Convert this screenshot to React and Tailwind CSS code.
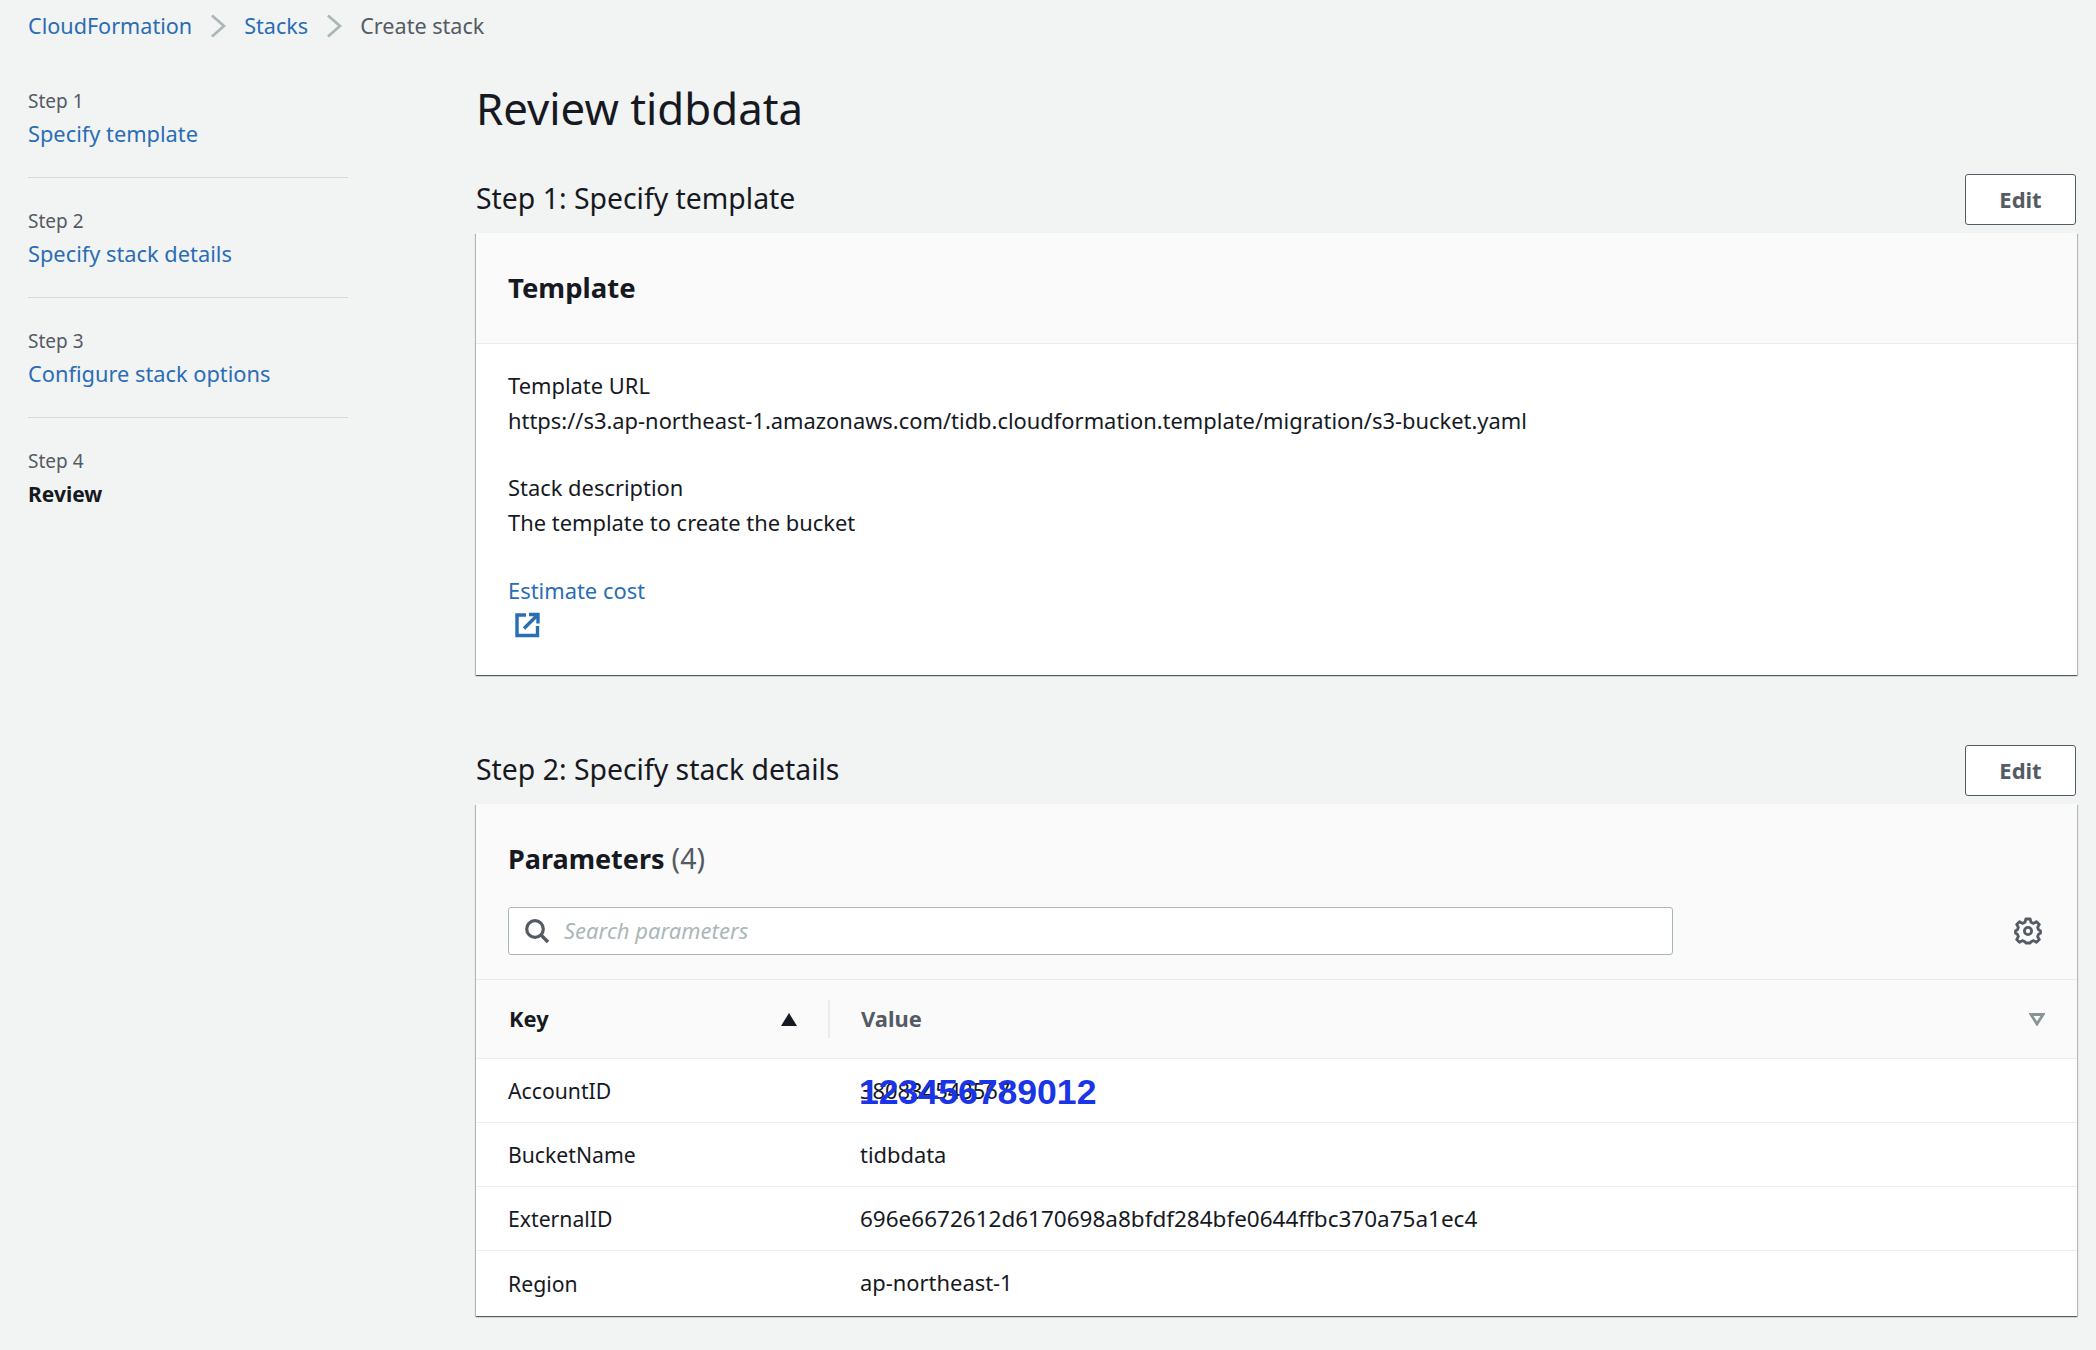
import React from "react";

const font = "font-['Noto_Sans',sans-serif]";

function Chevron() {
  return (
    <svg width="16" height="24" viewBox="0 0 16 24" fill="none" className="shrink-0">
      <path d="M2 1.5 L14 12 L2 22.5" stroke="#aab7b8" strokeWidth="2.8" />
    </svg>
  );
}

function Step({ n, label, active, last }) {
  return (
    <div className={last ? "pt-[31px]" : "h-[120px] pt-[31px] border-b border-[#d5dbdb]"}>
      <div className="text-[19px] leading-[24px] text-[#545b64]">Step {n}</div>
      <div className={`mt-[7px] leading-[28px] ${active ? "font-bold text-[#16191f] text-[21px]" : "text-[21.8px] text-[#2a6db5]"}`}>{label}</div>
    </div>
  );
}

function SectionHead({ title }) {
  return (
    <div className="flex items-center justify-between h-[51px] mb-[8px]">
      <h2 className="text-[28.4px] leading-[36px] -mt-[3px] text-[#16191f] font-normal">{title}</h2>
      <button className="w-[111px] h-[51px] mr-[1px] bg-white border-[1.5px] border-[#545b64] rounded-[3px] text-[22px] font-bold text-[#545b64]">Edit</button>
    </div>
  );
}

function Row({ k, v, last, hash, children }) {
  return (
    <div className={`relative flex items-center h-[64px] pt-[1px] ${last ? "" : "border-b-[1.5px] border-[#eaeded]"}`}>
      <div className="w-[384px] pl-[32px] text-[21.2px] text-[#16191f]">{k}</div>
      <div className={`${hash ? "text-[22.5px]" : "text-[21.9px]"} text-[#16191f]`}>{v}</div>
      {children}
    </div>
  );
}

const cardShadow = "shadow-[0_1px_1px_0_rgba(0,28,36,0.5),1px_1px_1px_0_rgba(0,28,36,0.2),-1px_1px_1px_0_rgba(0,28,36,0.2)]";

export default function App() {
  return (
    <div className={`${font} w-[2096px] h-[1350px] overflow-hidden bg-[#f2f3f3] text-[#16191f]`}>
      <nav className="flex items-center h-[52px] pl-[28px] text-[21.6px]">
        <span className="text-[#2a6db5]">CloudFormation</span>
        <span className="ml-[18px] mr-[18px]"><Chevron /></span>
        <span className="text-[#2a6db5]">Stacks</span>
        <span className="ml-[18px] mr-[18px]"><Chevron /></span>
        <span className="text-[#545b64]">Create stack</span>
      </nav>
      <div className="flex">
        <aside className="w-[476px] pl-[28px] shrink-0">
          <div className="w-[320px] mt-[6px]">
            <Step n={1} label="Specify template" />
            <Step n={2} label="Specify stack details" />
            <Step n={3} label="Configure stack options" />
            <Step n={4} label="Review" active last />
          </div>
        </aside>
        <main className="w-[1601px]">
          <h1 className="h-[122px] pt-[29px] text-[43.8px] leading-[54px] font-normal text-[#16191f]">Review tidbdata</h1>
          <SectionHead title="Step 1: Specify template" />
          <section className={`bg-white ${cardShadow} h-[442px]`}>
            <div className="flex items-center h-[111px] pl-[32px] bg-[#fafafa] border-b-[1.5px] border-[#eaeded]">
              <h3 className="text-[27.5px] font-bold">Template</h3>
            </div>
            <div className="pl-[32px] pt-[24px] text-[21.9px] leading-[35px]">
              <div>Template URL</div>
              <div>https://s3.ap-northeast-1.amazonaws.com/tidb.cloudformation.template/migration/s3-bucket.yaml</div>
              <div className="mt-[32px]">Stack description</div>
              <div>The template to create the bucket</div>
              <div className="mt-[33px] text-[#2a6db5]">Estimate cost</div>
              <svg width="26" height="26" viewBox="0 0 26 26" fill="none" className="ml-[6px] mt-[4px]">
                <path d="M12 3 H3 V23.5 H23.5 V14" stroke="#2a6db5" strokeWidth="3.4" />
                <path d="M15 2.5 H24 V11.5 M23.5 3 L10 16.5" stroke="#2a6db5" strokeWidth="3.4" />
              </svg>
            </div>
          </section>
          <div className="h-[70px]" />
          <SectionHead title="Step 2: Specify stack details" />
          <section className={`bg-white ${cardShadow} h-[512px]`}>
            <div className="h-[176px] bg-[#fafafa] border-b-[1.5px] border-[#eaeded] pl-[32px]">
              <div className="h-[103px] pt-[34px] text-[27px] leading-[40px]">
                <span className="font-bold">Parameters</span> <span className="text-[#545b64] text-[28.5px]">(4)</span>
              </div>
              <div className="flex items-center">
                <div className="flex items-center w-[1165px] h-[48px] bg-white border-[1.5px] border-[#aab7b8] rounded-[3px]">
                  <svg width="26" height="26" viewBox="0 0 26 26" fill="none" className="ml-[15px]">
                    <circle cx="11" cy="11" r="8.3" stroke="#545b64" strokeWidth="3.2" />
                    <path d="M17 17 L24 24" stroke="#545b64" strokeWidth="3.4" />
                  </svg>
                  <span className="ml-[14px] -mt-[1px] text-[22px] italic text-[#aab7b8]">Search parameters</span>
                </div>
                <svg width="28" height="28" viewBox="0 0 28 28" fill="none" className="ml-[341px]">
                  <circle cx="14" cy="14" r="3.6" stroke="#545b64" strokeWidth="2.8" />
                  <path d="M11.8 2 H16.2 L17 5.3 L19.6 6.4 L22.5 4.7 L25.3 7.5 L23.6 10.4 L24.7 13 L26.5 13.8 V16.2 L24.7 17 L23.6 19.6 L25.3 22.5 L22.5 25.3 L19.6 23.6 L17 24.7 L16.2 26 H11.8 L11 24.7 L8.4 23.6 L5.5 25.3 L2.7 22.5 L4.4 19.6 L3.3 17 L1.5 16.2 V13.8 L3.3 13 L4.4 10.4 L2.7 7.5 L5.5 4.7 L8.4 6.4 L11 5.3 Z" stroke="#545b64" strokeWidth="2.8" strokeLinejoin="round" />
                </svg>
              </div>
            </div>
            <div className="relative flex items-center h-[79px] bg-[#fafafa] border-b-[1.5px] border-[#eaeded]">
              <div className="w-[385px] pl-[33px] text-[21.9px] font-bold">Key</div>
              <div className="text-[21.9px] font-bold text-[#545b64]">Value</div>
              <svg width="16" height="13" viewBox="0 0 16 13" className="absolute left-[305px] top-[33px]"><path d="M8 0 L16 13 H0 Z" fill="#16191f" /></svg>
              <div className="absolute left-[352px] top-[20px] h-[38px] w-[1.5px] bg-[#eaeded]" />
              <svg width="16" height="13" viewBox="0 0 16 13" fill="none" className="absolute left-[1553px] top-[33px]"><path d="M2 1.5 H14 L8 11 Z" stroke="#879596" strokeWidth="2.8" /></svg>
            </div>
            <Row k="AccountID" v="380834543567">
              <span className="absolute left-[383px] top-[11px] font-['Liberation_Sans',sans-serif] font-bold text-[35.6px] leading-[44px] text-[#1a35e6]">123456789012</span>
            </Row>
            <Row k="BucketName" v="tidbdata" />
            <Row k="ExternalID" v="696e6672612d6170698a8bfdf284bfe0644ffbc370a75a1ec4" hash />
            <Row k="Region" v="ap-northeast-1" last />
          </section>
        </main>
      </div>
    </div>
  );
}
